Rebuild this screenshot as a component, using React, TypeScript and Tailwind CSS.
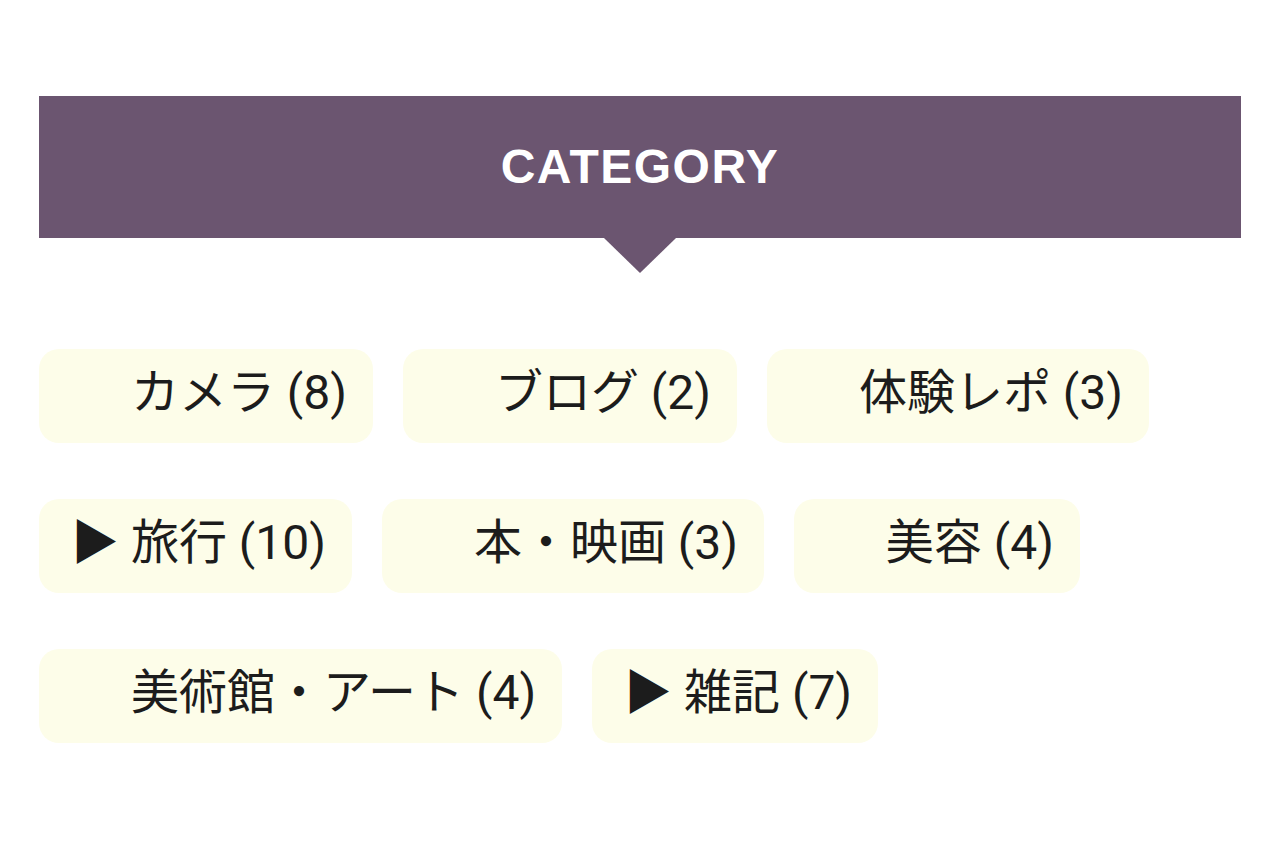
import React from "react";

type Category = {
  name: string;
  count: number;
  hasChildren?: boolean;
};

const categories: Category[] = [
  { name: "カメラ", count: 8 },
  { name: "ブログ", count: 2 },
  { name: "体験レポ", count: 3 },
  { name: "旅行", count: 10, hasChildren: true },
  { name: "本・映画", count: 3 },
  { name: "美容", count: 4 },
  { name: "美術館・アート", count: 4 },
  { name: "雑記", count: 7, hasChildren: true },
];

const CategoryChip: React.FC<{ category: Category }> = ({ category }) => (
  <a
    href="#"
    className="flex h-[94px] items-center rounded-[20px] bg-[#fdfde9] pb-[6px] pl-8 pr-[26px] text-[48px] leading-none text-[#1c1c1c] font-['Roboto','Noto_Sans_CJK_JP',sans-serif]"
  >
    {/* arrow only shows for parents, but keeps its space for the rest */}
    <span className={category.hasChildren ? "" : "invisible"}>▶</span>
    <span>&nbsp;{category.name} ({category.count})</span>
  </a>
);

export default function App() {
  return (
    <div className="min-h-[853px] bg-white px-[39px] pt-[96px]">
      {/* Header */}
      <div className="relative">
        <div className="flex h-[142px] items-center justify-center bg-[#6b5570]">
          <h2 className="text-[48px] font-bold tracking-[1.5px] text-white font-['Liberation_Sans',Arial,sans-serif]">
            CATEGORY
          </h2>
        </div>
        <div className="absolute left-1/2 top-full h-0 w-0 -translate-x-1/2 border-x-[36px] border-t-[35px] border-x-transparent border-t-[#6b5570]" />
      </div>

      {/* Chips */}
      <div className="mt-[111px] flex flex-wrap gap-x-[30px] gap-y-[56px]">
        {categories.map((c) => (
          <CategoryChip key={c.name} category={c} />
        ))}
      </div>
    </div>
  );
}
